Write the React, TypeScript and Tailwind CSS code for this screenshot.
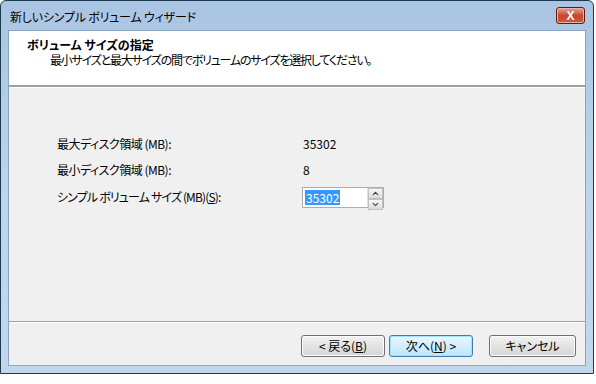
import { ChevronUp, ChevronDown } from 'lucide-react';

const font = { fontFamily: '"Noto Sans CJK JP", "Liberation Sans", sans-serif' };

function WinButton({ children, focused, wide }: { children: React.ReactNode; focused?: boolean; wide?: boolean }) {
  return (
    <button
      className={
        'h-[22px] rounded-[3px] border text-[12px] leading-none text-black ' +
        (wide ? 'w-[87px] ' : 'w-[84px] ') +
        (focused
          ? 'border-[#3c7fb1] bg-gradient-to-b from-[#eaf6fd] to-[#bee6fd] shadow-[inset_0_0_0_1px_#a7e2fb]'
          : 'border-[#707070] bg-gradient-to-b from-[#f2f2f2] to-[#d5d5d5] shadow-[inset_0_0_0_1px_#fcfcfc]')
      }
    >
      {children}
    </button>
  );
}

export default function App() {
  return (
    <div className="h-[384px] w-[596px] bg-white [font-feature-settings:'palt']" style={font}>
      <div className="h-[374px] w-[594px] rounded-t-[6px] border border-[#1b3a4e] bg-gradient-to-b from-[#a9c5e3] via-[#bcd4ec] to-[#c2d7ee] px-[7px] pb-[7px]">
        {/* title bar */}
        <div className="flex h-[29px] items-center justify-between">
          <span className="pl-[2px] pt-[2px] text-[12px] tracking-[-0.2px] text-black">新しいシンプル ボリューム ウィザード</span>
          <div className="mr-[1px] flex h-[17px] w-[29px] items-center justify-center rounded-[3px] border border-[#5c1a12] bg-gradient-to-b from-[#e5a497] via-[#c8452f] to-[#cf5a3e] shadow-[inset_0_0_0_1px_#eab4a8]">
            <span className="text-[12px] font-bold leading-none text-white" style={{ fontFamily: '"Liberation Sans", sans-serif' }}>
              X
            </span>
          </div>
        </div>
        {/* client */}
        <div className="flex h-[336px] flex-col border border-[#8aa4c1] bg-[#f0f0f0]">
          <div className="h-[56px] border-b-2 border-b-[#a0a0a0] bg-white pl-[18px] pt-[6px]">
            <div className="text-[12px] font-bold leading-[15px] text-black">ボリューム サイズの指定</div>
            <div className="pl-[23px] text-[12px] leading-[15px] tracking-[-1.2px] text-black">
              最小サイズと最大サイズの間でボリュームのサイズを選択してください。
            </div>
          </div>
          <div className="flex-1 border-t border-white pl-[48px] pt-[43px]">
            <div className="flex h-[26px] items-center text-[12px] text-black">
              <span className="w-[246px] tracking-[-0.5px]">最大ディスク領域 (MB):</span>
              <span>35302</span>
            </div>
            <div className="flex h-[26px] items-center text-[12px] text-black">
              <span className="w-[246px] tracking-[-0.5px]">最小ディスク領域 (MB):</span>
              <span>8</span>
            </div>
            <div className="mt-[3px] flex h-[22px] items-center text-[12px] text-black">
              <span className="w-[245px] tracking-[-0.85px]">
                シンプル ボリューム サイズ (MB)(<span className="underline">S</span>):
              </span>
              <div className="flex h-[21px] w-[82px] items-center border border-[#abadb3] bg-white pl-[2px]">
                <span className="bg-[#3399ff] px-[1px] leading-[15px] text-white">35302</span>
                <div className="ml-auto flex h-full w-[16px] flex-col border-l border-[#e0e0e0]">
                  <div className="flex flex-1 items-center justify-center border border-[#c0c0c0] bg-gradient-to-b from-[#f6f6f6] to-[#dcdcdc]">
                    <ChevronUp size={9} strokeWidth={3} className="text-[#404040]" />
                  </div>
                  <div className="flex flex-1 items-center justify-center border border-[#c0c0c0] bg-gradient-to-b from-[#f6f6f6] to-[#dcdcdc]">
                    <ChevronDown size={9} strokeWidth={3} className="text-[#404040]" />
                  </div>
                </div>
              </div>
            </div>
          </div>
          <div className="h-[44px] border-t border-t-[#a0a0a0]">
            <div className="flex h-full items-start justify-end gap-[4px] border-t border-white pr-[9px] pt-[12px]">
              <WinButton>
                &lt; 戻る(<span className="underline">B</span>)
              </WinButton>
              <WinButton focused>
                次へ(<span className="underline">N</span>) &gt;
              </WinButton>
              <div className="w-[8px]" />
              <WinButton wide>キャンセル</WinButton>
            </div>
          </div>
        </div>
      </div>
    </div>
  );
}
